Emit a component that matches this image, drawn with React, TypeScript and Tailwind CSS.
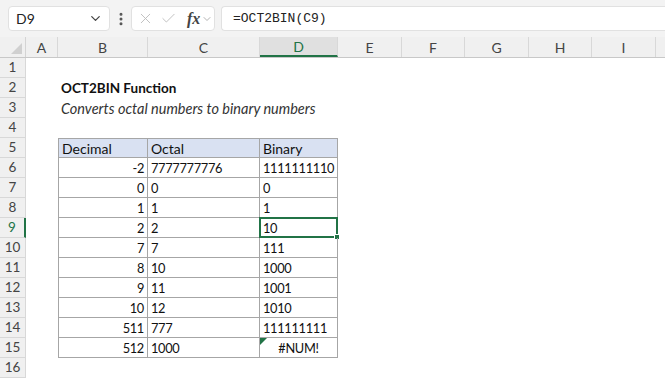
import { ChevronDown, X, Check, EllipsisVertical } from 'lucide-react';

const cols = [
  { name: 'A', w: 32 },
  { name: 'B', w: 90 },
  { name: 'C', w: 112 },
  { name: 'D', w: 78 },
  { name: 'E', w: 64 },
  { name: 'F', w: 63 },
  { name: 'G', w: 64 },
  { name: 'H', w: 63 },
  { name: 'I', w: 64 },
  { name: '', w: 64 },
];

const data: [string, string, string][] = [
  ['-2', '7777777776', '1111111110'],
  ['0', '0', '0'],
  ['1', '1', '1'],
  ['2', '2', '10'],
  ['7', '7', '111'],
  ['8', '10', '1000'],
  ['9', '11', '1001'],
  ['10', '12', '1010'],
  ['511', '777', '111111111'],
  ['512', '1000', '#NUM!'],
];

const font = { fontFamily: 'Lato, "Noto Sans", sans-serif' };

function Toolbar() {
  return (
    <div className="flex h-[37px] items-center bg-[#f3f3f3] pl-[8px]">
      <div className="flex h-[25px] w-[102px] items-center justify-between rounded-[4px] border border-[#e1e1e1] bg-white pl-[7px] pr-[6px] text-[14px] text-[#222]">
        <span>D9</span>
        <ChevronDown size={15} strokeWidth={2} className="text-[#444]" />
      </div>
      <div className="flex w-[21px] justify-center text-[#555]">
        <EllipsisVertical size={16} strokeWidth={2.5} />
      </div>
      <div className="flex h-[25px] w-[84px] items-center gap-[6px] rounded-[4px] border border-[#e1e1e1] bg-white pl-[5px] text-[#bdbdbd]">
        <X size={17} strokeWidth={1.3} />
        <Check size={17} strokeWidth={1.3} />
        <span
          className="ml-[4px] text-[16px] italic text-[#444]"
          style={{ fontFamily: '"Liberation Serif", serif' }}
        >
          <b>fx</b>
        </span>
        <ChevronDown size={12} strokeWidth={1.5} className="-ml-[5px] text-[#999]" />
      </div>
      <div
        className="ml-[6px] flex h-[25px] flex-1 items-center rounded-l-[4px] border border-r-0 border-[#e1e1e1] bg-white pl-[11px] text-[13px] text-[#222]"
        style={{ fontFamily: '"Liberation Mono", monospace' }}
      >
        =OCT2BIN(C9)
      </div>
    </div>
  );
}

function HeaderRow() {
  return (
    <div className="flex h-[21px] border-b border-[#c8c8c8] bg-[#f0f0f0]">
      <div className="relative w-[26px] shrink-0 border-r border-[#d4d4d4]">
        <svg className="absolute bottom-[3px] right-[3px]" width="11" height="11">
          <polygon points="11,0 11,11 0,11" fill="#d0d0d0" />
        </svg>
      </div>
      {cols.map((c, i) => {
        const sel = c.name === 'D';
        return (
          <div
            key={i}
            style={{ width: c.w }}
            className={
              'flex shrink-0 items-center justify-center border-r border-[#d8d8d8] pt-[1px] text-[14px] ' +
              (sel
                ? 'border-b-2 border-b-[#217346] bg-[#e0e0e0] text-[#217346]'
                : 'text-[#444]')
            }
          >
            {c.name}
          </div>
        );
      })}
    </div>
  );
}

function Cell({
  w,
  children,
  className = '',
}: {
  w: number;
  children?: React.ReactNode;
  className?: string;
}) {
  return (
    <div
      style={{ width: w }}
      className={'relative flex h-full shrink-0 items-center whitespace-nowrap pt-[2px] leading-none text-[#111] ' + className}
    >
      {children}
    </div>
  );
}

const num = 'text-[12.8px] tracking-[-0.3px]';

function Row({ n }: { n: number }) {
  const sel = n === 9;
  const inTable = n >= 5 && n <= 15;
  const isHead = n === 5;
  const d = n >= 6 && n <= 15 ? data[n - 6] : null;
  const tb = inTable
    ? 'border-b border-[#a6a6a6] ' + (isHead ? 'bg-[#d9e1f2] text-[14px] ' : num + ' ') + (n === 5 ? 'border-t ' : '')
    : '';

  return (
    <div className="flex h-[20px]">
      <div
        className={
          'flex w-[26px] shrink-0 items-center justify-center border-b border-r border-[#d8d8d8] bg-[#f0f0f0] text-[13.5px] ' +
          (sel ? 'border-r-2 border-r-[#217346] bg-[#e0e0e0] text-[#217346]' : 'text-[#444]')
        }
      >
        {n}
      </div>
      <Cell w={32} />
      <Cell
        w={90}
        className={inTable ? tb + 'border-l border-r border-[#a6a6a6] px-[3px] ' + (isHead ? '' : 'justify-end') : 'px-[3px]'}
      >
        {n === 2 && <span className="text-[13.5px] font-bold">OCT2BIN Function</span>}
        {n === 3 && <span className="text-[14.5px] italic text-[#333]">Converts octal numbers to binary numbers</span>}
        {isHead && 'Decimal'}
        {d && d[0]}
      </Cell>
      <Cell w={112} className={inTable ? tb + 'border-r border-[#a6a6a6] px-[3px]' : ''}>
        {isHead && 'Octal'}
        {d && d[1]}
      </Cell>
      <Cell
        w={78}
        className={
          inTable ? tb + 'border-r border-[#a6a6a6] px-[3px] ' + (n === 15 ? 'justify-center' : '') : ''
        }
      >
        {isHead && 'Binary'}
        {d && d[2]}
        {n === 15 && (
          <svg className="absolute left-0 top-0" width="7" height="7">
            <polygon points="0,0 7,0 0,7" fill="#217346" />
          </svg>
        )}
        {sel && (
          <div className="absolute -left-[1px] -top-[1px] h-[21px] w-[79px] border-2 border-[#217346]">
            <div className="absolute -bottom-[4px] -right-[4px] h-[6px] w-[6px] border border-white bg-[#217346]" />
          </div>
        )}
      </Cell>
      {cols.slice(4).map((c, i) => (
        <Cell key={i} w={c.w} />
      ))}
    </div>
  );
}

export default function App() {
  const rows = Array.from({ length: 16 }, (_, i) => i + 1);
  return (
    <div className="h-[380px] w-[665px] overflow-hidden bg-white" style={font}>
      <Toolbar />
      <HeaderRow />
      {rows.map((n) => (
        <Row key={n} n={n} />
      ))}
    </div>
  );
}
